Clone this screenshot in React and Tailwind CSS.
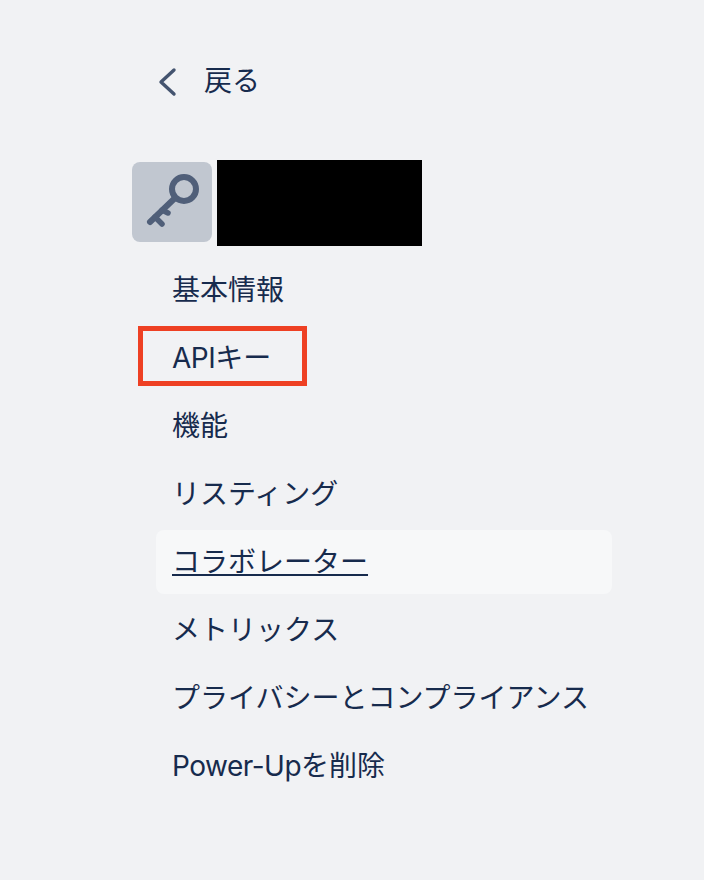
const items = [
  ["基本情報"],
  ["API", "キー"],
  ["機能"],
  ["リスティング"],
  ["コラボレーター"],
  ["メトリックス"],
  ["プライバシーとコンプライアンス"],
  ["Power-Up", "を削除"],
];

export default function App() {
  return (
    <div className="relative h-[880px] w-[704px] overflow-hidden bg-[#f1f2f4] pl-[132px] text-[28px] text-[#172b4d] font-['Inter','Noto_Sans_CJK_JP',sans-serif]">
      <div className="flex h-[162px] items-start pl-[24px] pt-[57px]">
        <div className="flex h-[48px] items-center">
          <svg width="24" height="32" viewBox="0 0 24 32" fill="none">
            <path d="M18 5 L5 17 L18 29" stroke="#44546f" strokeWidth="3.4" strokeLinecap="round" strokeLinejoin="round" />
          </svg>
          <span className="ml-[24px] leading-[48px]">戻る</span>
        </div>
      </div>
      <div className="flex h-[96px] items-start">
        <div className="flex h-[80px] w-[80px] items-center justify-center rounded-[8px] bg-[#c1c7d0]">
          <svg width="80" height="80" viewBox="0 0 80 80" fill="none">
            <circle cx="52" cy="27" r="12" stroke="#505f79" strokeWidth="6" />
            <path d="M43 36 L18 60" stroke="#505f79" strokeWidth="6" strokeLinecap="round" />
            <path d="M30 48 L36 51 M23 55 L30 62" stroke="#505f79" strokeWidth="5.5" strokeLinecap="round" />
          </svg>
        </div>
        <div className="ml-[5px] mt-[-2px] h-[86px] w-[205px] bg-black" />
      </div>
      <div className="ml-[24px] flex w-[456px] flex-col gap-[4px]">
        {items.map(([a, b], i) => (
          <div key={a} className={`flex h-[64px] items-center rounded-[8px] px-[16px] ${i === 4 ? "bg-[#f7f8f9] underline decoration-2 underline-offset-[2px]" : ""}`}>
            <span className="whitespace-nowrap">
              {b ? <span className="tracking-[-0.5px]">{a}</span> : a}
              {b}
            </span>
          </div>
        ))}
      </div>
      <div className="absolute left-[138px] top-[326px] h-[60px] w-[169px] border-[5px] border-[#ee4023]" />
    </div>
  );
}
